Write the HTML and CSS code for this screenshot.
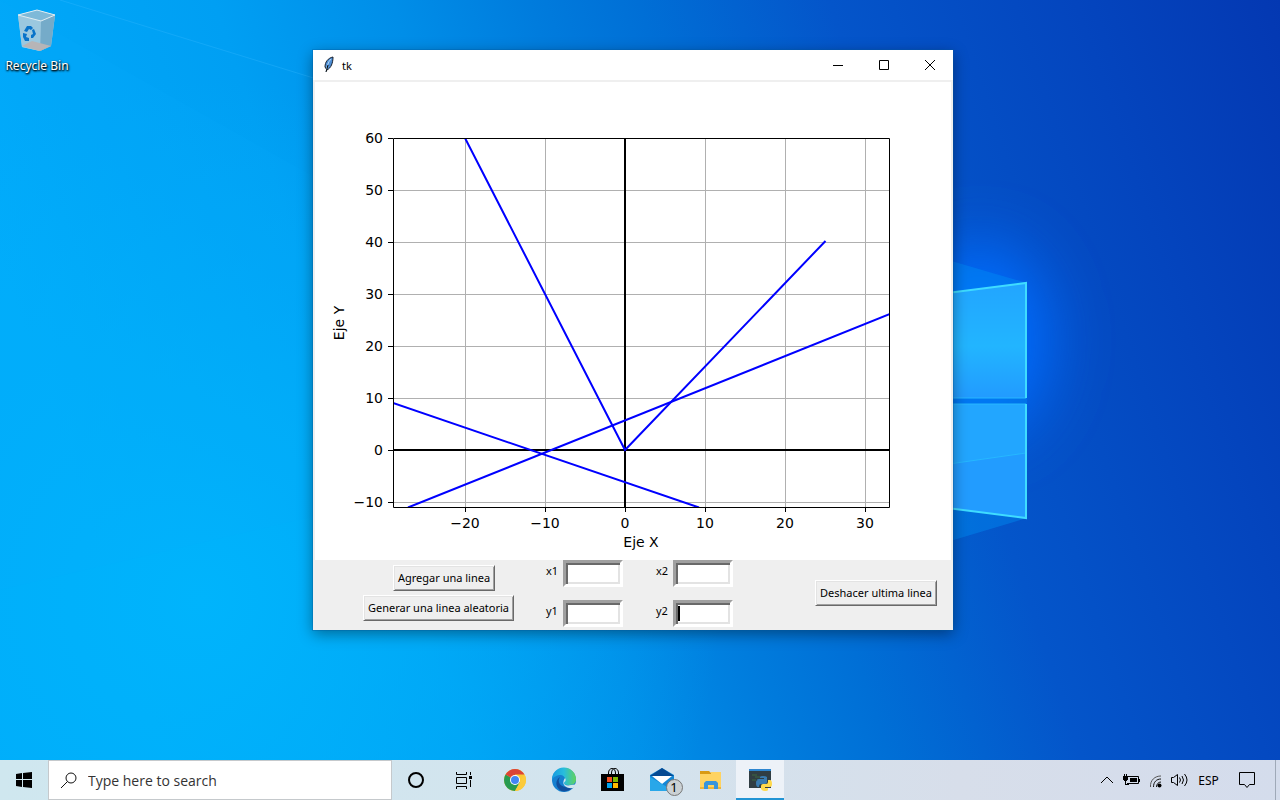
FILE: index.html
```html
<!DOCTYPE html>
<html lang="es">
<head>
<meta charset="utf-8">
<meta name="viewport" content="width=device-width, initial-scale=1">
<title>tk</title>
<link rel="stylesheet" href="styles.css">
</head>
<body>
<div class="screen">
  <main class="desktop">
    <svg class="wallpaper" viewBox="0 0 1280 800" preserveAspectRatio="none" aria-hidden="true">
      <defs>
        <linearGradient id="base" gradientUnits="userSpaceOnUse" x1="100" y1="560" x2="1330" y2="150">
          <stop offset="0" stop-color="#00abfb"/><stop offset=".22" stop-color="#009ff3"/><stop offset=".35" stop-color="#008ee8"/><stop offset=".45" stop-color="#007cdd"/><stop offset=".53" stop-color="#006fd6"/><stop offset=".67" stop-color="#0455ca"/><stop offset=".85" stop-color="#0445be"/><stop offset="1" stop-color="#0438b2"/>
        </linearGradient>
        <radialGradient id="low" gradientUnits="userSpaceOnUse" cx="200" cy="600" r="520"><stop offset="0" stop-color="#00b4fc"/><stop offset="1" stop-color="#00b0f8" stop-opacity="0"/></radialGradient>
        <linearGradient id="pane" x1="0" y1="0" x2="0" y2="1"><stop offset="0" stop-color="#22a5ff"/><stop offset=".55" stop-color="#22b5ff"/><stop offset="1" stop-color="#229bff"/></linearGradient>
        <filter id="soft" x="-1" y="-1" width="3" height="3"><feGaussianBlur stdDeviation="32"/></filter>
      </defs>
      <rect width="1280" height="800" fill="url(#base)"/>
      <rect width="1280" height="800" fill="url(#low)"/>
      <path d="M0 590L640 440V360L0 0z" fill="#0aaeff" opacity=".12"/>
      <path d="M60 0L320 80" stroke="#35b8ff" opacity=".35"/>
      <ellipse cx="980" cy="340" rx="68" ry="95" fill="#006dff" filter="url(#soft)"/>
      <path d="M900 246L1027 283V518L900 556z" fill="#0092f5" opacity=".4"/>
      <path d="M900 299L1026 283V398H900z" fill="url(#pane)"/>
      <path d="M900 404H1026V518L900 502z" fill="#229cff"/>
      <path d="M900 404H1026V453L900 471z" fill="#22a6ff"/>
      <path d="M900 398h126M900 404h126M900 471L1026 453" stroke="#26b7ff"/>
      <path d="M900 299L1026 283V398M1026 404V518L900 502" fill="none" stroke="#3fdcff" stroke-width="2"/>
    </svg>

    <a class="shortcut" href="#recycle">
      <svg width="40" height="44" viewBox="17 9 40 44" aria-hidden="true">
        <path d="M18 15L37 10L55 15L51 46L40 51L22 47z" fill="#a9cfe4"/>
        <path d="M18 15L41 21L40 51L22 47z" fill="#9bc8df"/>
        <path d="M41 21L55 15L51 46L40 51z" fill="#75abc9"/>
        <path d="M22 46L32 41L51 46L40 51z" fill="#b7b5b7"/>
        <path d="M18 15L37 10L55 15L41 21z" fill="#7eb9d8" stroke="#e0edf3"/>
        <path d="M24 31l3-5h4l2 2-2 2-2-1-2 3zM32 30l2-1 2 5-3 4h-2v-3l2-1zM23 33l4 1-1 3 3 1v3h-4l-2-4z" fill="#0873c9"/>
      </svg>
      <span>Recycle Bin</span>
    </a>

    <section class="window" aria-label="tk">
      <header class="titlebar">
        <svg class="feather" width="12" height="18" viewBox="0 0 12 18" aria-hidden="true">
          <path d="M10 1C5 2 2 6 2 11l2 3c4-2 6-7 6-13z" fill="#4d8ed5" stroke="#17202d"/>
          <path d="M8 3C5 6 4 10 3 16" fill="none" stroke="#b8dcfa"/><path d="M5 9L3 16" stroke="#000"/>
        </svg>
        <h1>tk</h1>
        <button class="control" aria-label="Minimizar"><svg width="10" height="10"><path d="M0 5.500h10" stroke="#000"/></svg></button>
        <button class="control" aria-label="Maximizar"><svg width="10" height="10"><path d="M.5.500h9v9h-9z" fill="none" stroke="#000"/></svg></button>
        <button class="control" aria-label="Cerrar"><svg width="10" height="10"><path d="M0 0L10 10M10 0L0 10" stroke="#000"/></svg></button>
      </header>

      <svg class="plot" viewBox="315 82 636 478" role="img" aria-label="Eje X, Eje Y">
        <defs><clipPath id="area"><path d="M393 138H890V508H393z"/></clipPath></defs>
        <path d="M465.500 138V507M545.500 138V507M705.500 138V507M785.500 138V507M865.500 138V507M393 190.500H889M393 242.500H889M393 294.500H889M393 346.500H889M393 398.500H889M393 502.500H889" stroke="#b0b0b0"/>
        <path d="M393 450H889M625 138V507" stroke="#000" stroke-width="2"/>
        <g clip-path="url(#area)" fill="none" stroke="#00f" stroke-width="2">
          <path d="M465 138L625 450L825.500 241"/><path d="M408 507.500L890 314"/><path d="M393 403L699 507.500"/>
        </g>
        <path d="M393.500 138.500H889.500V507.500H393.500zM388 138.500h5M388 190.500h5M388 242.500h5M388 294.500h5M388 346.500h5M388 398.500h5M388 450.500h5M388 502.500h5M465.500 508v4M545.500 508v4M625.500 508v4M705.500 508v4M785.500 508v4M865.500 508v4" fill="none" stroke="#000"/>
        <g class="ticks-y">
          <text x="383" y="143">60</text><text x="383" y="195">50</text><text x="383" y="247">40</text><text x="383" y="299">30</text><text x="383" y="351">20</text><text x="383" y="403">10</text><text x="383" y="455">0</text><text x="383" y="507">−10</text>
        </g>
        <g class="ticks-x">
          <text x="465" y="528">−20</text><text x="545" y="528">−10</text><text x="625" y="528">0</text><text x="705" y="528">10</text><text x="785" y="528">20</text><text x="865" y="528">30</text>
          <text x="641" y="547">Eje X</text><text transform="translate(344 323) rotate(-90)">Eje Y</text>
        </g>
      </svg>

      <form class="panel">
        <div class="actions">
          <button type="button" class="push push-add">Agregar una linea</button>
          <button type="button" class="push">Generar una linea aleatoria</button>
        </div>
        <div class="fields">
          <label for="x1">x1</label><input id="x1" type="text">
          <label for="x2">x2</label><input id="x2" type="text">
          <label for="y1">y1</label><input id="y1" type="text">
          <label for="y2">y2</label><input id="y2" class="current" type="text">
        </div>
        <button type="button" class="push push-undo">Deshacer ultima linea</button>
      </form>
    </section>
  </main>

  <footer class="taskbar">
    <button class="start" aria-label="Start"><svg width="16" height="16"><path d="M0 2L6 1V7H0zM7 1L16 0V7H7zM0 8H6V15L0 14zM7 8H16V16L7 15z"/></svg></button>
    <div class="search">
      <svg width="18" height="18" viewBox="0 0 18 18" aria-hidden="true"><circle cx="11" cy="7" r="5" fill="none" stroke="#111"/><path d="M7.500 10.500L1 17" stroke="#111"/></svg>
      <input type="text" aria-label="Search" placeholder="Type here to search">
    </div>
    <button class="task" aria-label="Cortana"><svg width="48" height="40"><circle cx="24" cy="20" r="7" fill="none" stroke="#000" stroke-width="2"/></svg></button>
    <button class="task" aria-label="Task View"><svg width="48" height="40" fill="none" stroke="#000"><path d="M16.500 12v2.500h10V12M16.500 17.500h10v6h-10zM16.500 29v-2.500h10V29M30.500 12v3M30.500 20v7"/><path d="M29 16h3v3h-3z" fill="#000" stroke="none"/></svg></button>
    <nav class="apps" aria-label="Apps">
      <button class="task" aria-label="Chrome"><svg width="48" height="40">
        <circle cx="24" cy="20" r="11" fill="#fbc934"/><path d="M24 20L14.500 14.500A11 11 0 0 0 24 31L29 22z" fill="#279b50"/><path d="M24 20L14.500 14.500A11 11 0 0 1 33.500 14.500H24z" fill="#dc4437"/><path d="M24 31L29 22L33.500 14.500A11 11 0 0 1 24 31z" fill="#fccb3b"/><circle cx="24" cy="20" r="5" fill="#fff"/><circle cx="24" cy="20" r="4" fill="#4285f4"/></svg></button>
      <button class="task" aria-label="Edge"><svg width="48" height="40">
        <defs><linearGradient id="edge"><stop stop-color="#179be1"/><stop offset=".5" stop-color="#28bddd"/><stop offset="1" stop-color="#62d35b"/></linearGradient></defs>
        <circle cx="24" cy="20" r="12" fill="#1680d0"/><path d="M12 20A12 12 0 0 1 36 19c0 5-3 6-8 6-3 0-4-1-4-2 2-2 2-7-3-8-4 0-8 2-9 5z" fill="url(#edge)"/><path d="M20 17c-4 6 2 12 13 10A12 12 0 0 1 21 31c-6-4-6-11-1-14z" fill="#124f9d"/><path d="M25 18c2 3-1 4-1 5 0 2 3 3 7 2 3 0 5-1 6-2-1 3-2 4-4 5-6 1-13-3-8-10z" fill="#d2e5ee"/></svg></button>
      <button class="task" aria-label="Store"><svg width="48" height="40"><path d="M19.500 15v-2c0-6 7-6 7 0v2M22.500 15v-2c0-6 7-6 7 0v2" fill="none" stroke="#000"/><path d="M12 14h23v17H12z"/><path d="M18 17h5v5h-5z" fill="#f25022"/><path d="M24 17h5v5h-5z" fill="#7fba00"/><path d="M18 23h5v5h-5z" fill="#00a4ef"/><path d="M24 23h5v5h-5z" fill="#ffb900"/></svg></button>
      <button class="task" aria-label="Mail"><svg width="48" height="40"><path d="M12 15L24 8L36 15V31H12z" fill="#1387d6"/><path d="M12 16L24 8L36 16z" fill="#064a92"/><path d="M14 16H34L24 24z" fill="#fff"/><path d="M12 17L36 31H12z" fill="#28a7e9"/><circle cx="36.500" cy="27.500" r="8" fill="#cbd1d4" stroke="#777"/><text class="count" x="36" y="32">1</text></svg></button>
      <button class="task" aria-label="File Explorer"><svg width="48" height="40"><path d="M13 11h9l2 2h10v3H13z" fill="#d99a13"/><path d="M24 12h10v3H24z" fill="#ffd361"/><path d="M13 14h21v15H13z" fill="#ffd361"/><path d="M13 27h21v2H13z" fill="#f0b639"/><path d="M17 29v-6l2-2h10l2 2v6h-4v-4h-6v4z" fill="#3995dc"/></svg></button>
      <button class="task active" aria-label="Python"><svg width="48" height="40"><path d="M13 9h22v19H13z" fill="#303d43"/><path d="M13 9h22v2H13z" fill="#2e86d0"/><path d="M16 15h5M19 17h5M16 20h4" stroke="#3c6840"/><path d="M21 20q0-1 2-1h5v-1h-4v-1q0-1 3-1t4 1v5q0 2-2 2h-4q-2 0-2 3h-1q-2 0-2-4 0-3 2-3z" fill="#397aaf"/><path d="M32 20h2q2 0 2 4 0 3-2 3h-5v1h3v2q0 1-3 1t-4-2v-3q0-2 2-2h3q2 0 2-2z" fill="#ffd94c"/></svg></button>
    </nav>
    <div class="tray">
      <button class="status" aria-label="Hidden icons"><svg width="24" height="24"><path d="M6 15L12 9L18 15" fill="none" stroke="#000"/></svg></button>
      <button class="status" aria-label="Battery"><svg width="24" height="24"><path d="M9 8.500h10.500v7H8" fill="none" stroke="#000"/><path d="M11 10h7v4h-7zM20 11h1v3h-1zM4 8h5v4H8v1H5v-1H4zM5 6h1v2H5zM7 6h1v2H7zM6 13h1v3h3v1H6z"/></svg></button>
      <button class="status" aria-label="Network"><svg width="24" height="24" fill="none"><path d="M7.500 19C7 12 12 8 18 8" stroke="#555"/><path d="M10.500 19c0-5 3-8 7.500-8M13.500 19c0-3 2-5 4.500-5" stroke="#111"/><circle cx="16.500" cy="17.500" r="2" fill="#000"/></svg></button>
      <button class="status" aria-label="Volume"><svg width="24" height="24" fill="none" stroke="#000"><path d="M4.500 9.500h2l4-3v11l-4-3h-2zM12.500 9.500q2 2.500 0 5M15 8q3 4 0 8M17.500 6q5 6 0 12"/></svg></button>
      <button class="language">ESP</button>
      <button class="notice" aria-label="Notifications"><svg width="18" height="18" viewBox="0 0 18 18"><path d="M1.500 1.500h15v12h-5l-2.500 3-2.500-3h-5z" fill="none" stroke="#000"/></svg></button>
      <button class="peek" aria-label="Show desktop"></button>
    </div>
  </footer>
</div>
</body>
</html>
```
FILE: styles.css
```css
* { box-sizing: border-box; }
body { margin: 0; font-family: "Noto Sans", "Open Sans", sans-serif; font-size: 12px; color: #000; }
button, input { font: inherit; color: inherit; margin: 0; }
button { border: 0; padding: 0; background: none; }
.screen { display: flex; flex-direction: column; height: 100vh; overflow: hidden; }
.desktop { position: relative; flex: 1; }
.wallpaper { position: absolute; inset: 0; width: 100%; height: 100vh; }
.shortcut { position: absolute; left: 0; top: 9px; width: 74px; display: flex; flex-direction: column; align-items: center; gap: 5px; color: #fff; text-decoration: none; line-height: 16px; text-shadow: 1px 1px 2px #000, 0 1px 2px #000; white-space: nowrap; }

.window { position: absolute; left: 313px; top: 50px; width: 640px; background: #efefef; box-shadow: 0 0 0 1px rgba(0, 90, 160, .3), 0 4px 14px rgba(0, 0, 0, .4); }
.titlebar { display: flex; align-items: center; height: 30px; background: #fff; padding-left: 10px; }
.titlebar h1 { flex: 1; margin: 0 0 0 7px; font-size: 11px; font-weight: 400; }
.control { display: flex; align-items: center; justify-content: center; width: 46px; height: 28px; }
.plot { display: block; width: calc(100% - 4px); margin: 2px 2px 0; background: #fff; }
.plot text { font-family: "DejaVu Sans", sans-serif; font-size: 14px; }
.ticks-y { text-anchor: end; }
.ticks-x { text-anchor: middle; }

.panel { display: flex; padding: 0 16px 3px 50px; font-size: 11px; }
.actions { display: flex; flex-direction: column; align-items: flex-start; gap: 4px; padding-top: 5px; width: 183px; }
.push { height: 26px; padding: 0 4px; line-height: 20px; white-space: nowrap; background: #efefef; border: 1px solid; border-color: #fff #696969 #696969 #fff; box-shadow: inset 1px 1px #e3e3e3, inset -1px -1px #a0a0a0; }
.push-add { margin-left: 30px; }
.push-undo { align-self: center; margin: 0 0 1px auto; }
.fields { display: grid; grid-template-columns: 17px 60px 50px 60px; row-gap: 13px; }
.fields label { padding-top: 3px; line-height: 16px; }
.fields label:nth-of-type(even) { padding-left: 33px; }
.fields input { width: 60px; height: 27px; padding: 2px 4px; background: #fff; border: 3px solid; border-color: #a0a0a0 #fff #fff #a0a0a0; border-radius: 0; outline: 0; box-shadow: inset 2px 2px #696969, inset -2px -2px #e3e3e3; }
.fields .current { background: linear-gradient(#000, #000) 2px 3px / 2px 15px no-repeat #fff; }

.taskbar { position: relative; display: flex; height: 40px; background: linear-gradient(90deg, #cfe7ef, #d3e4ee 45%, #d7deea 75%, #d4dcec); }
.start { display: flex; align-items: center; justify-content: center; width: 48px; }
.search { display: flex; align-items: center; gap: 10px; width: 344px; padding-left: 11px; background: #fff; border: 1px solid #c5c9cc; }
.search input { flex: 1; min-width: 0; border: 0; padding: 0; background: none; outline: 0; font-family: "Open Sans", sans-serif; font-size: 14px; }
.search input::placeholder { color: #333; opacity: 1; }
.task { width: 48px; height: 40px; }
.task svg { display: block; }
.apps { display: flex; gap: 1px; margin-left: 3px; }
.active { background: #edf2f8; box-shadow: inset 0 -2px #2294d4; }
.count { font-size: 13px; text-anchor: middle; }
.tray { display: flex; align-items: center; margin-left: auto; }
.status { width: 24px; height: 24px; }
.status svg, .notice svg { display: block; }
.language { width: 35px; }
.notice { display: flex; justify-content: center; width: 42px; margin-right: 7px; }
.peek { width: 5px; height: 40px; border-left: 1px solid #9fa9b8; }
```
